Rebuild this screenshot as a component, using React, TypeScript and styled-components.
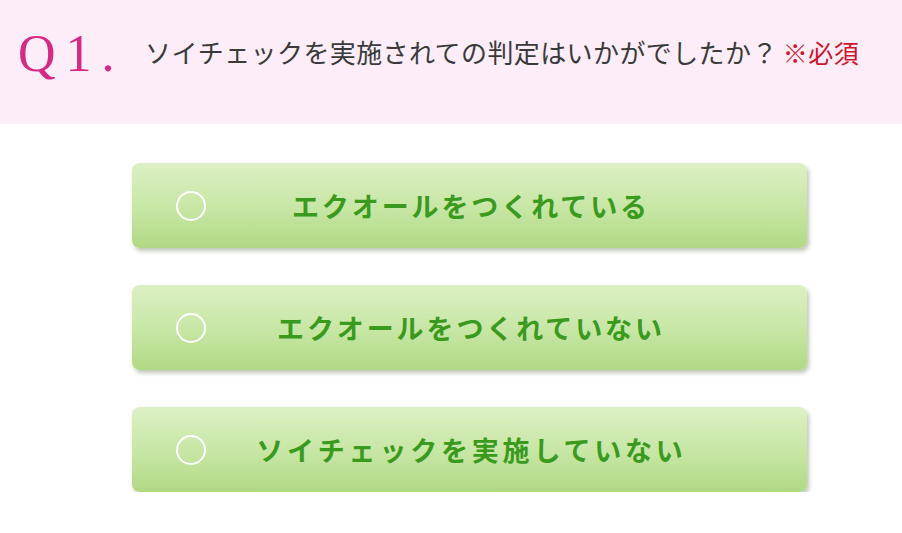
import React from 'react'
import styled, { createGlobalStyle } from 'styled-components'

const jpFont = '"Noto Sans CJK JP", "Noto Sans", sans-serif'

const GlobalStyle = createGlobalStyle`
  html, body {
    margin: 0;
    padding: 0;
    background: #ffffff;
  }
  body {
    font-family: ${jpFont};
  }
`

const Header = styled.header`
  height: 124px;
  box-sizing: border-box;
  padding: 22px 0 0 18px;
  background: #fdedf9;
  display: flex;
  align-items: flex-start;
`

const QNumber = styled.div`
  width: 127px;
  flex: none;
  font-family: "Liberation Serif", "DejaVu Serif", serif;
  font-size: 52px;
  line-height: 64px;
  letter-spacing: 10px;
  color: #d42a86;
`

const Question = styled.h1`
  margin: 10px 0 0;
  font-family: ${jpFont};
  font-size: 26px;
  line-height: 40px;
  font-weight: 400;
  color: #3a3a3a;
  letter-spacing: 0.4px;
`

const Required = styled.span`
  margin-left: 5px;
  color: #d0142c;
  font-size: 25px;
`

const Choices = styled.ul`
  list-style: none;
  margin: 39px 0 0 132px;
  padding: 0;
  width: 675px;
  display: flex;
  flex-direction: column;
  gap: 37px;
`

const Choice = styled.li`
  height: 85px;
  border-radius: 8px;
  background: linear-gradient(to bottom, #ddf0c5 0%, #c6e6a3 55%, #b0d984 100%);
  box-shadow: 2px 3px 4px rgba(90, 110, 70, 0.4);
  display: grid;
  grid-template-columns: 1fr auto 1fr;
  align-items: center;
  cursor: pointer;
`

const Radio = styled.span`
  justify-self: start;
  margin-left: 44px;
  width: 26px;
  height: 26px;
  border: 2.5px solid #ffffff;
  border-radius: 50%;
`

const Label = styled.span<{ $spacing: number }>`
  font-family: ${jpFont};
  font-weight: 700;
  font-size: 27px;
  line-height: 1;
  color: #3a9a1e;
  letter-spacing: ${p => p.$spacing}px;
  padding-left: ${p => p.$spacing}px;
  white-space: nowrap;
`

const options = [
  { text: 'エクオールをつくれている', spacing: 2.9 },
  { text: 'エクオールをつくれていない', spacing: 2.9 },
  { text: 'ソイチェックを実施していない', spacing: 3.8 },
]

export default function App() {
  return (
    <>
      <GlobalStyle />
      <Header>
        <QNumber>Q1.</QNumber>
        <Question>
          ソイチェックを実施されての判定はいかがでしたか？
          <Required>※必須</Required>
        </Question>
      </Header>
      <Choices>
        {options.map(o => (
          <Choice key={o.text}>
            <Radio />
            <Label $spacing={o.spacing}>{o.text}</Label>
            <span />
          </Choice>
        ))}
      </Choices>
    </>
  )
}
